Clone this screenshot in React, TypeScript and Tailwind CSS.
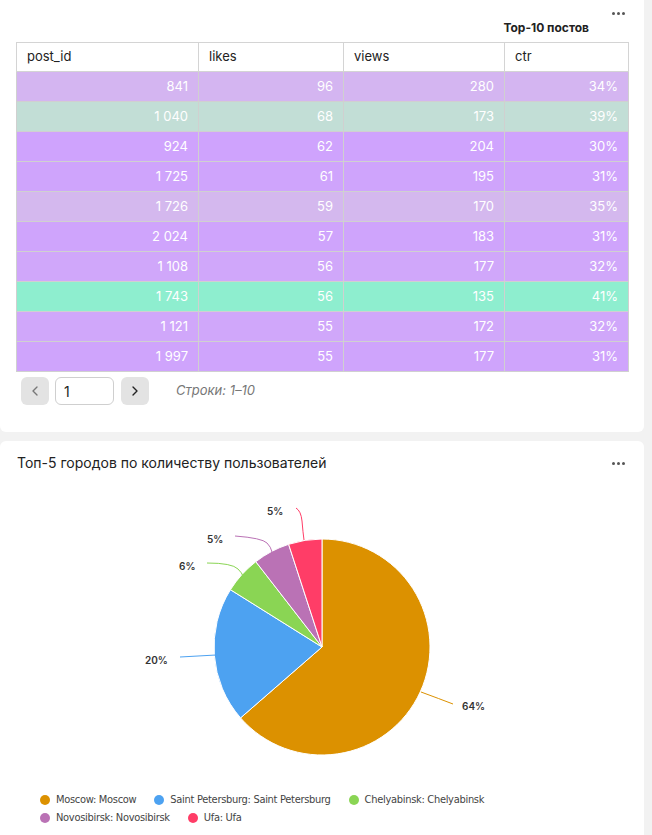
import React from "react";
import { ChevronLeft, ChevronRight } from "lucide-react";

type Row = { postId: string; likes: number; views: number; ctr: string; bg: string };

const rows: Row[] = [
  { postId: "841", likes: 96, views: 280, ctr: "34%", bg: "bg-[#d4b5f1]" },
  { postId: "1 040", likes: 68, views: 173, ctr: "39%", bg: "bg-[#c2ded6]" },
  { postId: "924", likes: 62, views: 204, ctr: "30%", bg: "bg-[#cfa3fd]" },
  { postId: "1 725", likes: 61, views: 195, ctr: "31%", bg: "bg-[#cfa4fc]" },
  { postId: "1 726", likes: 59, views: 170, ctr: "35%", bg: "bg-[#d4b8ee]" },
  { postId: "2 024", likes: 57, views: 183, ctr: "31%", bg: "bg-[#cfa4fc]" },
  { postId: "1 108", likes: 56, views: 177, ctr: "32%", bg: "bg-[#d0a7fa]" },
  { postId: "1 743", likes: 56, views: 135, ctr: "41%", bg: "bg-[#8eeecf]" },
  { postId: "1 121", likes: 55, views: 172, ctr: "32%", bg: "bg-[#d0a7fa]" },
  { postId: "1 997", likes: 55, views: 177, ctr: "31%", bg: "bg-[#cfa4fc]" },
];

const slices = [
  { name: "Moscow: Moscow", value: 0.636, color: "#dc9100", dot: "bg-[#dc9100]" },
  { name: "Saint Petersburg: Saint Petersburg", value: 0.203, color: "#4da2f1", dot: "bg-[#4da2f1]" },
  { name: "Chelyabinsk: Chelyabinsk", value: 0.056, color: "#8ad554", dot: "bg-[#8ad554]" },
  { name: "Novosibirsk: Novosibirsk", value: 0.055, color: "#ba72b5", dot: "bg-[#ba72b5]" },
  { name: "Ufa: Ufa", value: 0.05, color: "#ff3d67", dot: "bg-[#ff3d67]" },
];

const Dots = () => (
  <div className="flex gap-[2px]">
    <span className="w-[3px] h-[3px] bg-[#555] rounded-full" />
    <span className="w-[3px] h-[3px] bg-[#555] rounded-full" />
    <span className="w-[3px] h-[3px] bg-[#555] rounded-full" />
  </div>
);

const cx = 322;
const cy = 166;
const r = 108;

const point = (frac: number) => {
  const a = frac * Math.PI * 2;
  return [cx + r * Math.sin(a), cy - r * Math.cos(a)];
};

const Pie = () => {
  let acc = 0;
  return (
    <svg width="644" height="300" className="block">
      {slices.map((s) => {
        const [x1, y1] = point(acc);
        acc += s.value;
        const [x2, y2] = point(Math.min(acc, 0.99999));
        const large = s.value > 0.5 ? 1 : 0;
        return (
          <path
            key={s.name}
            d={`M${cx},${cy} L${x1},${y1} A${r},${r} 0 ${large} 1 ${x2},${y2} Z`}
            fill={s.color}
            stroke="#fff"
            strokeWidth="1"
          />
        );
      })}
      <path d="M421,211 Q440,218 453,223" stroke="#dc9100" fill="none" />
      <path d="M180,176 L216,174" stroke="#4da2f1" fill="none" />
      <path d="M207,82 Q232,82 238,88 Q242,92 243,95" stroke="#8ad554" fill="none" />
      <path d="M235,55 Q262,57 267,62 Q271,66 272,71" stroke="#ba72b5" fill="none" />
      <path d="M296,27 Q301,30 302,40 Q303,52 304,59" stroke="#ff3d67" fill="none" />
      <g fontFamily="Inter, sans-serif" fontSize="10" fontWeight="600" fill="#333">
        <text x="462" y="229">64%</text>
        <text x="145" y="183">20%</text>
        <text x="179" y="89">6%</text>
        <text x="207" y="62">5%</text>
        <text x="267" y="34">5%</text>
      </g>
    </svg>
  );
};

const LegendItem = ({ s }: { s: (typeof slices)[number] }) => (
  <div className="flex items-center gap-[6px]">
    <span className={`w-[10px] h-[10px] rounded-full ${s.dot}`} />
    <span>{s.name}</span>
  </div>
);

export default function App() {
  return (
    <div className="bg-[#f2f2f2] w-[652px] h-[835px] overflow-hidden pr-[8px] font-['Inter',sans-serif] text-[#222]">
      <div className="bg-white rounded-b-[6px] h-[432px] relative">
        <div className="absolute right-[19px] top-[12px]">
          <Dots />
        </div>
        <div className="pt-[21px] h-[42px] flex justify-end pr-[55px] text-[12px] font-bold leading-[14px]">
          Top-10 постов
        </div>
        <table className="ml-[16px] border-collapse text-[13px]">
          <colgroup>
            <col className="w-[182px]" />
            <col className="w-[145px]" />
            <col className="w-[161px]" />
            <col className="w-[124px]" />
          </colgroup>
          <thead>
            <tr className="h-[29px]">
              {["post_id", "likes", "views", "ctr"].map((h) => (
                <th key={h} className="border border-[#d4d4d4] text-left font-normal px-[10px]">
                  {h}
                </th>
              ))}
            </tr>
          </thead>
          <tbody>
            {rows.map((row) => (
              <tr key={row.postId} className={`h-[30px] ${row.bg} text-white`}>
                <td className="border border-[#d0d0d0] text-right px-[10px]">{row.postId}</td>
                <td className="border border-[#d0d0d0] text-right px-[10px]">{row.likes}</td>
                <td className="border border-[#d0d0d0] text-right px-[10px]">{row.views}</td>
                <td className="border border-[#d0d0d0] text-right px-[10px]">{row.ctr}</td>
              </tr>
            ))}
          </tbody>
        </table>
        <div className="flex items-center ml-[21px] mt-[5px] h-[28px]">
          <button className="w-[28px] h-[28px] rounded-[6px] bg-[#e3e3e3] flex items-center justify-center text-[#777]">
            <ChevronLeft size={16} />
          </button>
          <div className="ml-[6px] w-[59px] h-[28px] rounded-[6px] border border-[#cfcfcf] text-[14px] flex items-center px-[8px]">
            1
          </div>
          <button className="ml-[7px] w-[28px] h-[28px] rounded-[6px] bg-[#e3e3e3] flex items-center justify-center text-[#222]">
            <ChevronRight size={16} />
          </button>
          <span className="ml-[27px] text-[13px] italic text-[#777]">Строки: 1–10</span>
        </div>
      </div>
      <div className="bg-white rounded-[6px] mt-[9px] h-[420px]">
        <div className="flex items-center justify-between pl-[17px] pr-[19px] pt-[4px] h-[40px]">
          <span className="text-[14px] leading-[18px]">Топ-5 городов по количеству пользователей</span>
          <Dots />
        </div>
        <Pie />
        <div className="pl-[40px] pt-[10px] text-[11px] tracking-[-0.3px] text-[#444] font-['DejaVu_Sans_Condensed','Roboto',sans-serif] leading-[18px]">
          <div className="flex gap-[18px]">
            <LegendItem s={slices[0]} />
            <LegendItem s={slices[1]} />
            <LegendItem s={slices[2]} />
          </div>
          <div className="flex gap-[18px]">
            <LegendItem s={slices[3]} />
            <LegendItem s={slices[4]} />
          </div>
        </div>
      </div>
    </div>
  );
}
